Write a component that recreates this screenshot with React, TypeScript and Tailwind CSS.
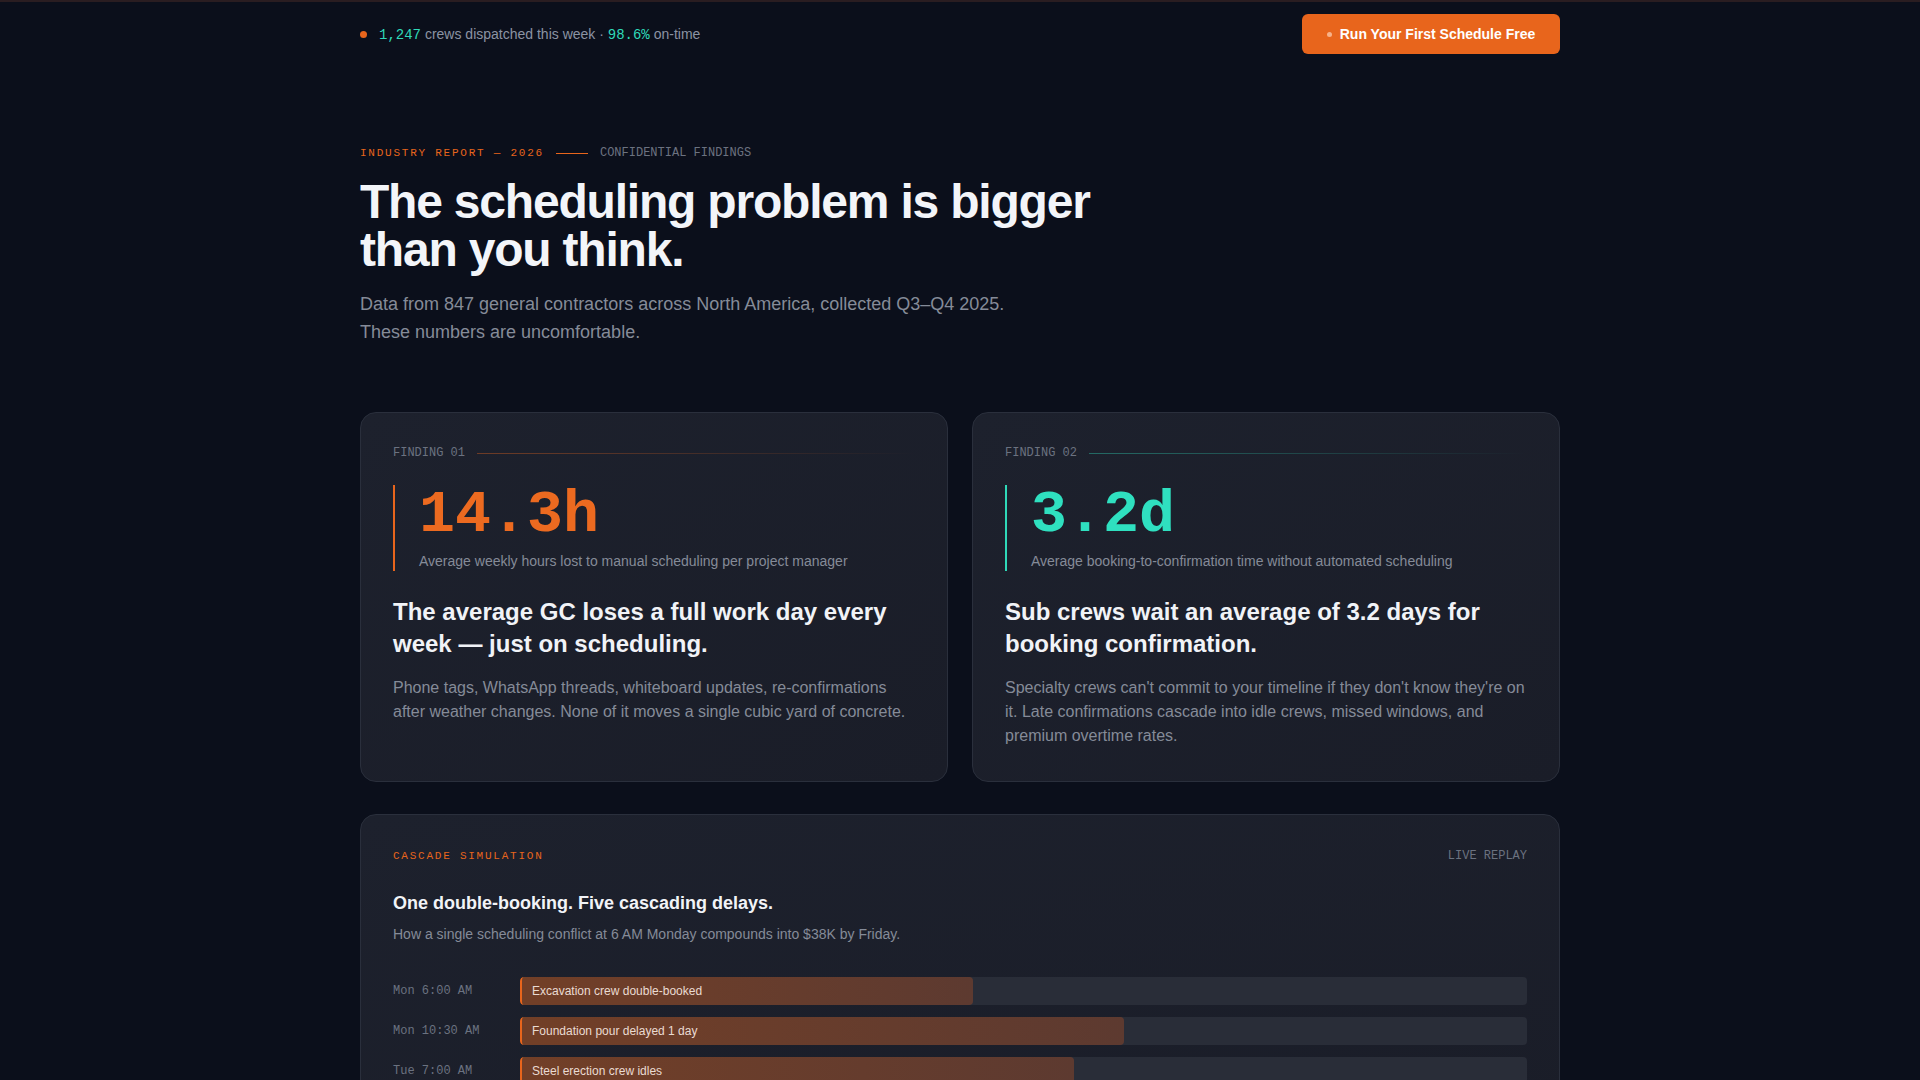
import React from "react";

const sans = "font-['Liberation_Sans',Arial,sans-serif]";
const mono = "font-['Liberation_Mono','Courier_New',monospace]";

type Finding = {
  readonly index: string;
  readonly value: string;
  readonly caption: string;
  readonly title: string;
  readonly body: string;
  readonly tone: "orange" | "teal";
};

const findings: Finding[] = [
  {
    index: "01",
    value: "14.3h",
    caption: "Average weekly hours lost to manual scheduling per project manager",
    title: "The average GC loses a full work day every week — just on scheduling.",
    body: "Phone tags, WhatsApp threads, whiteboard updates, re-confirmations after weather changes. None of it moves a single cubic yard of concrete.",
    tone: "orange",
  },
  {
    index: "02",
    value: "3.2d",
    caption: "Average booking-to-confirmation time without automated scheduling",
    title: "Sub crews wait an average of 3.2 days for booking confirmation.",
    body: "Specialty crews can't commit to your timeline if they don't know they're on it. Late confirmations cascade into idle crews, missed windows, and premium overtime rates.",
    tone: "teal",
  },
];

const cascade = [
  { time: "Mon 6:00 AM", label: "Excavation crew double-booked", pct: 45 },
  { time: "Mon 10:30 AM", label: "Foundation pour delayed 1 day", pct: 60 },
  { time: "Tue 7:00 AM", label: "Steel erection crew idles", pct: 55 },
];

function StatusBar() {
  return (
    <header className="mx-auto flex w-full max-w-[1200px] items-center justify-between py-3">
      <div className="flex items-center gap-2 text-sm text-[#8b93a3]">
        <span className="h-[7px] w-[7px] rounded-full bg-[#e8651c]" />
        <span className="ml-1">
          <span className={`${mono} text-sm text-[#2fd9b9]`}>1,247</span> crews dispatched this week ·{" "}
          <span className={`${mono} text-sm text-[#2fd9b9]`}>98.6%</span> on-time
        </span>
      </div>
      <a
        href="#start"
        className="flex h-[40px] w-[258px] items-center justify-center gap-2 rounded-md bg-[#e8651c] text-sm font-bold text-white"
      >
        <span className="h-[5px] w-[5px] rounded-full bg-[#f7b28a]" />
        Run Your First Schedule Free
      </a>
    </header>
  );
}

function FindingCard({ finding }: { readonly finding: Finding }) {
  const orange = finding.tone === "orange";
  return (
    <article className="rounded-2xl border border-[#2a2f3c] bg-gradient-to-br from-[#1d212d] to-[#1a1d28] p-8 pb-[33px]">
      <div className="flex items-center gap-3">
        <span className={`${mono} text-xs text-[#6b7280]`}>FINDING {finding.index}</span>
        <span
          className={`h-px flex-1 bg-gradient-to-r ${
            orange ? "from-[#e8651c]/40" : "from-[#2fd9b9]/40"
          } to-transparent`}
        />
      </div>
      <div className={`mt-6 border-l-2 pl-6 ${orange ? "border-[#e8651c]" : "border-[#2fd9b9]"}`}>
        <div
          className={`${mono} text-6xl font-bold leading-none ${orange ? "text-[#ec6a20]" : "text-[#2fe0c0]"}`}
        >
          {finding.value}
        </div>
        <p className="mt-[6px] text-sm leading-5 text-[#858b98]">{finding.caption}</p>
      </div>
      <h3 className="mt-[25px] text-2xl font-bold leading-8 text-[#f1f3f7]">{finding.title}</h3>
      <p className="mt-4 text-base leading-6 text-[#858b98]">{finding.body}</p>
    </article>
  );
}

function CascadeCard() {
  return (
    <section className="mt-8 rounded-2xl border border-[#2a2f3c] bg-gradient-to-br from-[#1d212d] to-[#1a1d28] px-8 pt-[33px] pb-10">
      <div className="flex items-center justify-between">
        <span className={`${mono} text-[11px] tracking-[0.16em] text-[#e8651c]`}>CASCADE SIMULATION</span>
        <span className={`${mono} text-xs text-[#6b7280]`}>LIVE REPLAY</span>
      </div>
      <h3 className="mt-6 text-lg font-bold leading-7 text-[#f1f3f7]">One double-booking. Five cascading delays.</h3>
      <p className="mt-[7px] text-sm leading-5 text-[#858b98]">
        How a single scheduling conflict at 6 AM Monday compounds into $38K by Friday.
      </p>
      <div className="mt-[33px] flex flex-col gap-3">
        {cascade.map((row) => (
          <div key={row.time} className="flex items-center">
            <span className={`${mono} w-[127px] shrink-0 text-xs text-[#6b7280]`}>{row.time}</span>
            <div className="h-7 flex-1 overflow-hidden rounded bg-[#292d38]">
              <div
                className="flex h-full items-center rounded border-l-2 border-[#e8651c] bg-gradient-to-r from-[#723f27] to-[#5d3a30] pl-2.5 text-xs text-[#eadbd2]"
                style={{ width: `${row.pct}%` }}
              >
                {row.label}
              </div>
            </div>
          </div>
        ))}
      </div>
    </section>
  );
}

export default function App() {
  return (
    <div className={`${sans} min-h-screen border-t-2 border-[#2a1d21] bg-[#0b0f1b] px-4`}>
      <StatusBar />
      <main className="mx-auto w-full max-w-[1200px] pt-[79px] pb-16">
        <div className="flex items-center gap-3">
          <span className={`${mono} text-[11px] tracking-[0.16em] text-[#e8651c]`}>INDUSTRY REPORT — 2026</span>
          <span className="h-px w-8 bg-[#e8651c]" />
          <span className={`${mono} text-xs text-[#6b7280]`}>CONFIDENTIAL FINDINGS</span>
        </div>
        <h1 className="mt-[16px] text-5xl leading-none font-bold tracking-tight text-[#f3f5f9]">
          The scheduling problem is bigger
          <br />
          than you think.
        </h1>
        <p className="mt-4 text-lg leading-[1.6] text-[#858b98]">
          Data from 847 general contractors across North America, collected Q3–Q4 2025.
          <br />
          These numbers are uncomfortable.
        </p>
        <div className="mt-[65px] grid grid-cols-2 gap-6">
          {findings.map((f) => (
            <FindingCard key={f.index} finding={f} />
          ))}
        </div>
        <CascadeCard />
      </main>
    </div>
  );
}
